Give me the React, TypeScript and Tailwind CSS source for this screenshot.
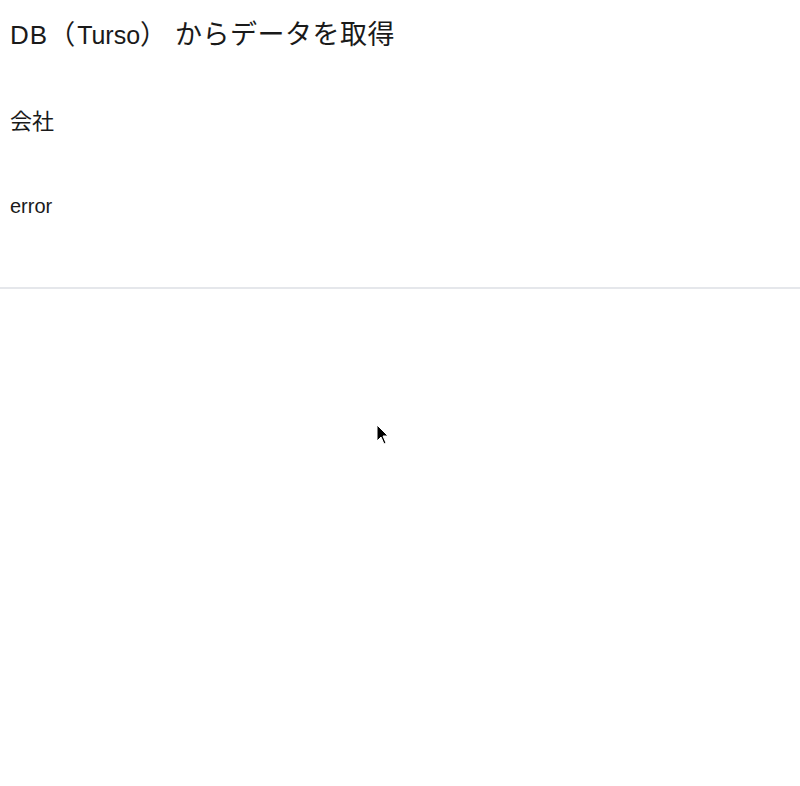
export default function App() {
  return (
    <div
      className="relative min-h-[786px] bg-white text-[#1a1a1a]"
      style={{ fontFamily: '"Liberation Sans", "Noto Sans CJK JP", sans-serif' }}
    >
      <div className="px-[10px] pt-[19px]">
        <h1 className="h-[32px] whitespace-nowrap text-[25px] leading-[32px]">
          <span className="text-[26px] tracking-[1px]">DB</span>
          <span className="text-[27px] leading-none tracking-[2px]">（</span>
          <span>Turso</span>
          <span className="text-[27px] leading-none tracking-[8px]">）</span>
          <span className="text-[27px] leading-none tracking-[0.5px]">からデータを取得</span>
        </h1>
        <h2 className="mt-[56px] text-[22px] leading-[30px]">会社</h2>
        <p className="mt-[55px] text-[20px] leading-[28px]">error</p>
      </div>
      <hr className="mt-[67px] border-t-2 border-[#e5e7eb]" />
      <svg
        className="absolute left-[376px] top-[424px]"
        width="14"
        height="22"
        viewBox="0 0 14 22"
      >
        <path d="M1 1 L1 17 L5 13 L8 20 L10 19 L7 12 L12 12 Z" fill="#000" stroke="#fff" strokeWidth="1" />
      </svg>
    </div>
  );
}
